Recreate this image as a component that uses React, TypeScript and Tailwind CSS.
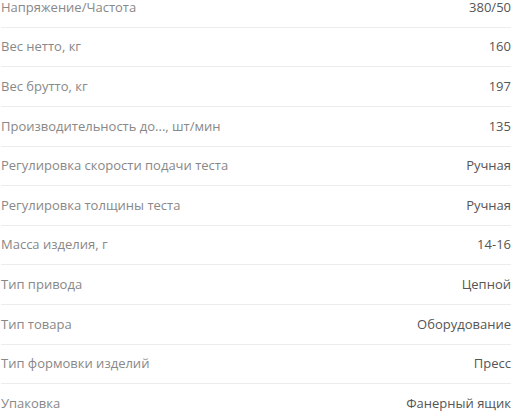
const rows: [string, string][] = [
  ["Напряжение/Частота", "380/50"],
  ["Вес нетто, кг", "160"],
  ["Вес брутто, кг", "197"],
  ["Производительность до..., шт/мин", "135"],
  ["Регулировка скорости подачи теста", "Ручная"],
  ["Регулировка толщины теста", "Ручная"],
  ["Масса изделия, г", "14-16"],
  ["Тип привода", "Цепной"],
  ["Тип товара", "Оборудование"],
  ["Тип формовки изделий", "Пресс"],
  ["Упаковка", "Фанерный ящик"],
];

export default function App() {
  return (
    <div className="h-[413px] overflow-hidden bg-white font-['Open_Sans',sans-serif] text-[13px]">
      <div className="-mt-[11.8px] pl-[1px] pr-[4px]">
        {rows.map(([label, value], i) => (
          <div
            key={i}
            className="flex h-[39.6px] items-center justify-between border-b border-[#ececec]"
          >
            <span className="text-[#888]">{label}</span>
            <span className="text-[#555]">{value}</span>
          </div>
        ))}
      </div>
    </div>
  );
}
